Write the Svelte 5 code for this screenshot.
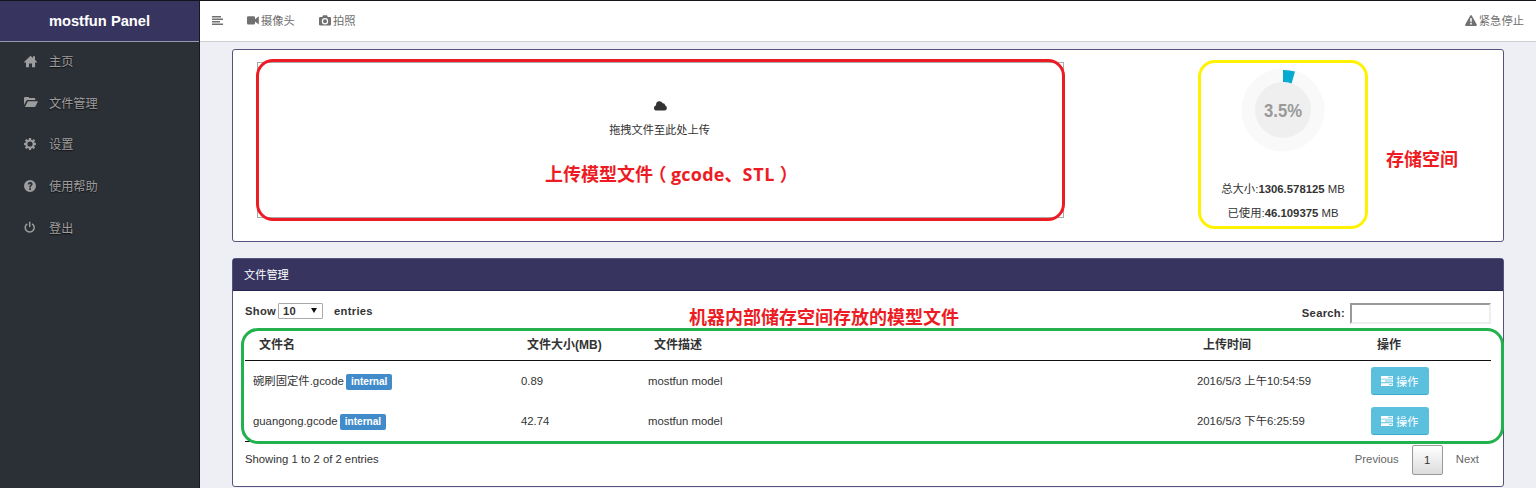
<script>
  const icons = {
    home: 'M0 7 6.5.8 9 3V1.2h2v3.6L13 7l-.9.9-1-.9v5.2H8V8.5H5v3.7H2V7l-1 .9z',
    folder: 'M0 9V2.2Q0 1 1.2 1h3Q5 1 5.3 2h5Q11.3 2 11.3 3.2V4H4Q2.8 4 2.2 5zM1 11l2.4-5Q3.7 5.2 4.6 5.2H14L11.7 10Q11.2 11 10.2 11z',
    help: 'M6 0a6 6 0 1 0 0 12A6 6 0 1 0 6 0M5.2 8.3h1.7V10H5.2zM3.7 4.5C3.8 2.9 4.6 2 6.1 2c1.6 0 2.5.9 2.5 2.1 0 1.7-1.7 1.7-1.7 3.3H5.2c0-2.1 1.6-2.1 1.6-3.1 0-.9-1.3-.9-1.4.2z',
    gear: 'M5 0h2l.3 1.8 1 .4L9.8 1.1l1.3 1.3L10.2 3.8l.4 1L12 5v2l-1.5.3-.4 1 1 1.4-1.4 1.4-1.4-1-1 .4L7 12H5l-.3-1.5-1-.4-1.4 1L.9 9.7l1-1.4-.4-1L0 7V5l1.5-.3.4-1-1-1.4L2.3.9l1.4 1 1-.4zM6 3.4a2.6 2.6 0 1 0 0 5.2 2.6 2.6 0 1 0 0-5.2'
  };
  const menu = [['home', '主页'], ['folder', '文件管理'], ['gear', '设置'], ['help', '使用帮助'], ['power', '登出']];
  const files = [
    { name: '碗刷固定件.gcode', size: '0.89', desc: 'mostfun model', time: '2016/5/3 上午10:54:59' },
    { name: 'guangong.gcode', size: '42.74', desc: 'mostfun model', time: '2016/5/3 下午6:25:59' }
  ];
</script>

<div class="page">
  <aside>
    <div class="brand">mostfun Panel</div>
    <nav>
      {#each menu as [icon, label]}
        <a class="item">
          <svg width="14" height="13" viewBox="0 0 14 13">
            {#if icon === 'power'}
              <path d="M3.3 2.8a4.5 4.5 0 1 0 4.8 0M5.7.7v5.4" fill="none" stroke="currentColor" stroke-width="1.5" />
            {:else}
              <path d={icons[icon]} fill="currentColor" fill-rule="evenodd" />
            {/if}
          </svg>
          <span>{label}</span>
        </a>
      {/each}
    </nav>
  </aside>
  <div class="main">
    <header>
      <svg class="bars" width="11" height="9" viewBox="0 0 11 9"><path d="M0 .8h9M0 3.3h11M0 5.8h8M0 8.2h11" stroke="currentColor" stroke-width="1.5" /></svg>
      <a class="camera">
        <svg width="12" height="9" viewBox="0 0 12 9"><path d="M1.2.3h5.6Q8 .3 8 1.5v1.7L11.8.3v8.2L8 5.6v1.7q0 1.2-1.2 1.2H1.2Q0 8.5 0 7.3V1.5Q0 .3 1.2.3z" fill="currentColor" /></svg>摄像头
      </a>
      <a class="photo">
        <svg width="12" height="11" viewBox="0 0 12 11"><path d="M1.3 2h2L4 .3h4L8.8 2h2Q12 2 12 3.2v6q0 1.3-1.2 1.3H1.2Q0 10.5 0 9.2v-6Q0 2 1.3 2zM6 3a3.2 3.2 0 1 0 0 6.4A3.2 3.2 0 1 0 6 3m0 1.2a2 2 0 1 1 0 4 2 2 0 1 1 0-4" fill="currentColor" fill-rule="evenodd" /></svg>拍照
      </a>
      <a class="stop">
        <svg width="12" height="11" viewBox="0 0 12 11"><path d="M5.3.5q.7-.9 1.4 0l5.1 9Q12 11 11 11H1Q0 11 .2 9.5zM5.1 3.3l.3 4h1.2l.3-4zM5.2 8v1.5h1.6V8z" fill="currentColor" fill-rule="evenodd" /></svg>紧急停止
      </a>
    </header>
    <main>
      <section class="panel top">
        <div class="drop">
          <svg width="13" height="10" viewBox="0 0 13 10"><path d="M2.8 9.5Q0 9.5 0 6.9 0 4.8 2 4.3 2 .5 5.3.3q2.5 0 3.4 2 2.2-.2 2.5 2.3 1.6.5 1.6 2.4 0 2.5-2.5 2.5z" fill="#333" /></svg>
          <span>拖拽文件至此处上传</span>
        </div>
        <div class="storage">
          <svg width="84" height="84" viewBox="0 0 84 84">
            <circle cx="42" cy="42" r="41.5" fill="#f9f9f9" />
            <circle cx="42" cy="42" r="28" fill="#efefef" />
            <path d="M42 2A40 40 0 0 1 54 3.6L50.6 15.4A28 28 0 0 0 42 14z" fill="#04aad0" />
            <text x="42" y="49" text-anchor="middle" textLength="38" lengthAdjust="spacingAndGlyphs">3.5%</text>
          </svg>
          <p class="total">总大小:<b>1306.578125</b> MB</p>
          <p>已使用:<b>46.109375</b> MB</p>
        </div>
      </section>
      <section class="panel files">
        <h2>文件管理</h2>
        <div class="tools">
          <b>Show</b>
          <span class="select">10<i></i></span>
          <b>entries</b>
          <b class="search">Search:</b>
          <input aria-label="Search" />
        </div>
        <div class="row head">
          <span>文件名</span><span>文件大小(MB)</span><span>文件描述</span><span>上传时间</span><span>操作</span>
        </div>
        {#each files as f}
          <div class="row">
            <span class="name">{f.name} <em>internal</em></span><span>{f.size}</span><span>{f.desc}</span><span>{f.time}</span>
            <span><button>
              <svg width="12" height="10" viewBox="0 0 12 10"><path d="M0 0h12v2.7H0zM0 3.6h12v2.7H0zM0 7.2h12v2.7H0z" fill="#fff" /><path d="M7 1.3h4M4 5h7M8 8.6h3" stroke="#5bc0de" stroke-width=".9" /></svg>操作
            </button></span>
          </div>
        {/each}
        <footer>
          <span class="info">Showing 1 to 2 of 2 entries</span>
          <span>Previous</span><span class="current">1</span><span>Next</span>
        </footer>
      </section>
    </main>
  </div>
  <div class="mark red"></div>
  <div class="mark yellow"></div>
  <div class="mark green"></div>
  <div class="note upload-note">上传模型文件<i>（</i><span>gcode</span>、<span class="stl">STL</span><i>）</i></div>
  <div class="note storage-note">存储空间</div>
  <div class="note files-note">机器内部储存空间存放的模型文件</div>
</div>

<style>
  :global(body) { margin: 0; overflow: hidden; }
  * { box-sizing: border-box; }
  .page { position: relative; display: flex; width: 1536px; height: 488px; border-top: 1px solid #15131a; background: #eeeff4; color: #333; font: 11.2px/16px "Liberation Sans", "Noto Sans CJK SC", sans-serif; overflow: hidden; }
  aside { width: 200px; background: #2b2f36; border-right: 1px solid #17191d; }
  .brand { height: 41px; padding-top: 1px; border-bottom: 1px solid #9998ac; background: #37355f; color: #fff; text-align: center; font: bold 14.7px/38px "Liberation Sans", sans-serif; }
  nav { display: flex; flex-direction: column; }
  .item { display: flex; align-items: center; height: 41.6px; padding: 0 0 1px 24px; color: #9d9d9d; font-size: 12.2px; text-shadow: 0 1px 1px #111; }
  .item svg { margin: 0 12px 2px 0; }
  .item span { margin-left: -1px; }
  .main { width: 1336px; }
  header { display: flex; align-items: center; height: 41px; padding: 0 12px 1px; border-bottom: 1px solid #cfcfcf; background: #fff; color: #707070; font-size: 11.3px; }
  header a { display: flex; align-items: center; gap: 2px; }
  .camera { margin-left: 24px; }
  .photo { margin-left: 24px; }
  .stop { margin-left: auto; }
  main { padding: 7px 32px 0; }
  .panel { border: 1px solid #55527e; border-radius: 3px; background: #fff; }
  .top { display: flex; height: 193px; padding: 12px 0 0 24px; }
  .drop { display: flex; flex-direction: column; align-items: center; width: 807px; height: 156px; padding-top: 38px; border: 1px solid #aaa; }
  .drop span { margin: 11px 2px 0 0; }
  .storage { display: flex; flex-direction: column; align-items: center; width: 170px; margin-left: 134px; padding-top: 6px; }
  .storage text { fill: #999; font: bold 18px "Liberation Sans", sans-serif; }
  p { margin: 0; font-size: 11.35px; line-height: 24px; white-space: nowrap; }
  .total { margin-top: 25px; }
  .files { height: 229px; margin-top: 16px; }
  h2 { height: 32px; margin: 0; padding-left: 11px; border-bottom: 1px solid #27244f; background: #37355f; color: #fff; font-size: 11.2px; font-weight: 400; line-height: 32px; }
  .tools { display: flex; align-items: center; height: 42px; padding: 0 12px; letter-spacing: .3px; }
  .select { display: flex; align-items: center; justify-content: space-between; width: 45px; height: 16px; margin: 0 11px 3px 2px; padding: 0 5px 0 4px; border: 1px solid #aaa; border-radius: 1px; font-weight: bold; }
  .tools b { padding-bottom: 3px; }
  .select i { border: 3px solid transparent; border-top: 5px solid #111; border-bottom: 0; }
  .tools .search { margin-left: auto; padding: 1px 0 0; }
  input { width: 141px; height: 21px; margin: 2px 0 0 5px; border: 2px solid; border-color: #999 #eee #eee #999; background: #fff; }
  .row { display: grid; grid-template-columns: 268px 127px 549px 174px 1fr; align-items: center; height: 40px; margin: 0 12px; font-size: 11.35px; }
  .row > span { padding-left: 8px; white-space: nowrap; }
  .head { height: 28px; padding-bottom: 4px; border-bottom: 1px solid #111; font-size: 12px; font-weight: bold; }
  .head > span { padding-left: 14px; }
  em { display: inline-block; height: 16px; margin-left: -1px; padding: 0 5px; border-radius: 2px; background: #428bca; color: #fff; font: bold 10.1px/15px "Liberation Sans", sans-serif; vertical-align: 0; }
  button { display: flex; align-items: center; gap: 3px; width: 58px; height: 28px; padding: 0 9px 0 10px; border: 0; border-bottom: 1px solid #3aa9ca; border-radius: 3px; background: #5bc0de; color: #fff; font: 11.2px "Noto Sans CJK SC", sans-serif; white-space: nowrap; }
  footer { display: flex; align-items: center; margin: 0 12px; padding-top: 3px; border-top: 1px solid #111; color: #666; font-size: 11.3px; }
  footer span { padding-bottom: 2px; }
  .info { margin-right: auto; color: #333; }
  .current { width: 31px; height: 30px; margin: 0 13px; border: 1px solid #999; border-radius: 2px; background: linear-gradient(#fff, #dcdcdc); color: #333; line-height: 28px; text-align: center; }
  footer span:last-child { padding-right: 12px; }
  .mark { position: absolute; border: 3px solid; pointer-events: none; }
  .red { left: 256px; top: 58px; width: 809px; height: 162px; border-color: #ed1c24; border-radius: 17px; }
  .yellow { left: 1198px; top: 59px; width: 170px; height: 169px; border-color: #fff200; border-radius: 17px; }
  .green { left: 241px; top: 327px; width: 1263px; height: 116px; border-color: #22b14c; border-radius: 17px; }
  .note { position: absolute; color: #ed1c24; font: bold 18px/24px "Noto Sans CJK SC", sans-serif; white-space: nowrap; }
  .note span { font-family: "Open Sans", sans-serif; letter-spacing: .2px; }
  .note .stl { letter-spacing: .7px; }
  .note i { display: inline-block; width: 18px; text-align: center; font-style: normal; font-feature-settings: "halt"; }
  .upload-note { left: 545px; top: 160px; }
  .storage-note { left: 1386px; top: 145px; }
  .files-note { left: 689px; top: 303px; }
</style>
